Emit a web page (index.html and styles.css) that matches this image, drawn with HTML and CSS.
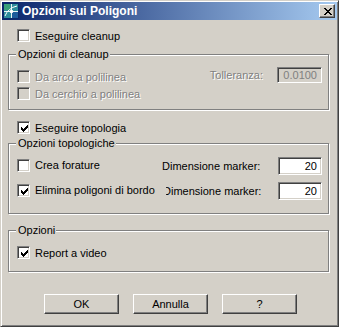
FILE: index.html
```html
<!DOCTYPE html>
<html lang="it">
<head>
    <meta charset="UTF-8">
    <title>Opzioni sui Poligoni</title>
    <link rel="stylesheet" href="styles.css">
</head>
<body>
    <div class="window">
        <div class="titlebar">
            <svg class="app-icon" width="16" height="16" viewBox="0 0 16 16">
                <rect x="0" y="0" width="16" height="16" fill="#0a2a6a"/>
                <rect x="1" y="1" width="14" height="14" fill="#2e8c9c"/>
                <path d="M1 1h6v6h-6z" fill="#3aa07a"/>
                <path d="M9 9h6v6h-6z" fill="#1c5c9c"/>
                <path d="M8.5 1v14M1 8.5h14" stroke="#e8f4f4" stroke-width="1" fill="none"/>
                <path d="M2 13 Q5 5 14 3" stroke="#ffffff" stroke-width="1" fill="none"/>
                <circle cx="8.5" cy="8.5" r="1.8" fill="#ffffff"/>
            </svg>
            <span class="title">Opzioni sui Poligoni</span>
            <button type="button" class="close-btn">
                <svg width="8" height="7" viewBox="0 0 8 7">
                    <path d="M0 0h2v1h-2zM6 0h2v1h-2zM1 1h2v1h-2zM5 1h2v1h-2zM2 2h4v1h-4zM3 3h2v1h-2zM2 4h4v1h-4zM1 5h2v1h-2zM5 5h2v1h-2zM0 6h2v1h-2zM6 6h2v1h-2z" fill="#000"/>
                </svg>
            </button>
        </div>

        <div class="client">
            <label class="check row-cleanup">
                <span class="box"></span>
                <span>Eseguire cleanup</span>
            </label>

            <div class="group group-cleanup">
                <span class="legend">Opzioni di cleanup</span>
                <div class="line line-first">
                    <label class="check disabled">
                        <span class="box"></span>
                        <span>Da arco a polilinea</span>
                    </label>
                    <div class="field-right">
                        <span class="disabled-text">Tolleranza:</span>
                        <span class="edit edit-small disabled-edit">0.0100</span>
                    </div>
                </div>
                <div class="line line-second">
                    <label class="check disabled">
                        <span class="box"></span>
                        <span>Da cerchio a polilinea</span>
                    </label>
                </div>
            </div>

            <label class="check row-topo">
                <span class="box checked">
                    <svg width="7" height="7" viewBox="0 0 7 7"><path d="M6 0h1v1h-1zM5 1h2v1h-2zM0 2h1v1h-1zM4 2h3v1h-3zM0 3h2v1h-2zM3 3h3v1h-3zM0 4h5v1h-5zM1 5h3v1h-3zM2 6h1v1h-1z" fill="#000"/></svg>
                </span>
                <span>Eseguire topologia</span>
            </label>

            <div class="group group-topo">
                <span class="legend">Opzioni topologiche</span>
                <div class="topo-row topo-first">
                    <label class="check topo-check">
                        <span class="box"></span>
                        <span>Crea forature</span>
                    </label>
                    <span class="marker-label">Dimensione marker:</span>
                    <span class="edit edit-marker">20</span>
                </div>
                <div class="topo-row topo-second">
                    <label class="check topo-check wide">
                        <span class="box checked">
                            <svg width="7" height="7" viewBox="0 0 7 7"><path d="M6 0h1v1h-1zM5 1h2v1h-2zM0 2h1v1h-1zM4 2h3v1h-3zM0 3h2v1h-2zM3 3h3v1h-3zM0 4h5v1h-5zM1 5h3v1h-3zM2 6h1v1h-1z" fill="#000"/></svg>
                        </span>
                        <span>Elimina poligoni di bordo</span>
                    </label>
                    <span class="marker-label clipped"><span>Dimensione marker:</span></span>
                    <span class="edit edit-marker">20</span>
                </div>
            </div>

            <div class="group group-opzioni">
                <span class="legend">Opzioni</span>
                <label class="check row-report">
                    <span class="box checked">
                        <svg width="7" height="7" viewBox="0 0 7 7"><path d="M6 0h1v1h-1zM5 1h2v1h-2zM0 2h1v1h-1zM4 2h3v1h-3zM0 3h2v1h-2zM3 3h3v1h-3zM0 4h5v1h-5zM1 5h3v1h-3zM2 6h1v1h-1z" fill="#000"/></svg>
                    </span>
                    <span>Report a video</span>
                </label>
            </div>

            <div class="buttons">
                <button type="button" class="btn">OK</button>
                <button type="button" class="btn">Annulla</button>
                <button type="button" class="btn">?</button>
            </div>
        </div>
    </div>
</body>
</html>
```

FILE: styles.css
```css
body {
    margin: 0;
    background-color: #d4d0c8;
    font-family: "Liberation Sans", Arial, sans-serif;
    font-size: 11px;
    color: #000;
}

.window {
    width: 339px;
    height: 327px;
    box-sizing: border-box;
    padding: 1px;
    border: 1px solid;
    border-color: #d4d0c8 #404040 #404040 #d4d0c8;
    box-shadow: inset 1px 1px #fff, inset -1px -1px #808080;
    background-color: #d4d0c8;
}

/* barra del titolo */
.titlebar {
    height: 18px;
    display: flex;
    align-items: center;
    background: linear-gradient(to right, #0a246a, #a6caf0);
    color: #fff;
}

.app-icon {
    margin-left: 1px;
    flex-shrink: 0;
}

.title {
    margin-left: 3px;
    font-weight: bold;
    font-size: 12px;
}

.close-btn {
    margin-left: auto;
    margin-right: 2px;
    width: 16px;
    height: 14px;
    padding: 0;
    box-sizing: border-box;
    border: 1px solid;
    border-color: #fff #404040 #404040 #fff;
    box-shadow: inset -1px -1px #808080;
    background-color: #d4d0c8;
    display: flex;
    align-items: center;
    justify-content: center;
}

.close-btn svg {
    margin-left: 1px;
}

.client {
    display: flex;
    flex-direction: column;
    padding-left: 6px;
}

/* checkbox */
.check {
    display: flex;
    align-items: center;
    white-space: nowrap;
    height: 13px;
}

.box {
    width: 13px;
    height: 13px;
    box-sizing: border-box;
    border: 1px solid;
    border-color: #808080 #fff #fff #808080;
    box-shadow: inset 1px 1px #404040, inset -1px -1px #d4d0c8;
    background-color: #fff;
    margin-right: 5px;
    flex-shrink: 0;
    display: flex;
    padding: 3px 0 0 3px;
}

.box svg {
    display: block;
}

.disabled {
    color: #808080;
    text-shadow: 1px 1px #fff;
}

.disabled .box {
    background-color: #d4d0c8;
}

.disabled-text {
    color: #808080;
    text-shadow: 1px 1px #fff;
}

.row-cleanup {
    margin-top: 9px;
    margin-left: 9px;
}

.row-topo {
    margin-top: 11px;
    margin-left: 9px;
}

/* gruppi */
.group {
    position: relative;
    width: 321px;
    box-sizing: border-box;
    border: 1px solid #808080;
    box-shadow: inset 1px 1px #fff, 1px 1px #fff;
}

.legend {
    position: absolute;
    top: -7px;
    left: 7px;
    padding: 0 1px 0 2px;
    background-color: #d4d0c8;
    line-height: 13px;
}

.group-cleanup {
    margin-top: 12px;
    height: 56px;
    padding: 12px 0 0 8px;
}

.line {
    display: flex;
    align-items: flex-end;
}

.line-first {
    height: 16px;
}

.line-second {
    margin-top: 4px;
}

.field-right {
    margin-left: auto;
    margin-right: 6px;
    display: flex;
    align-items: center;
    gap: 14px;
}

/* campi di testo */
.edit {
    box-sizing: border-box;
    border: 1px solid;
    border-color: #808080 #fff #fff #808080;
    box-shadow: inset 1px 1px #404040, inset -1px -1px #d4d0c8;
    background-color: #fff;
    text-align: right;
    padding-right: 4px;
    display: flex;
    align-items: center;
    justify-content: flex-end;
}

.edit-small {
    width: 45px;
    height: 16px;
}

.disabled-edit {
    background-color: #d4d0c8;
    color: #808080;
}

.group-topo {
    margin-top: 9px;
    height: 71px;
    padding: 13px 6px 0 8px;
}

.topo-row {
    display: flex;
    align-items: center;
    height: 18px;
}

.topo-second {
    margin-top: 7px;
}

.topo-check {
    width: 145px;
    margin-top: -2px;
}

.topo-check.wide {
    width: 149px;
}

.marker-label {
    white-space: nowrap;
}

.clipped {
    overflow: hidden;
}

.clipped span {
    display: inline-block;
    margin-left: -3px;
}

.edit-marker {
    margin-left: auto;
    width: 44px;
    height: 18px;
}

.group-opzioni {
    margin-top: 16px;
    height: 42px;
    padding: 15px 0 0 8px;
}

/* pulsanti */
.buttons {
    display: flex;
    gap: 14px;
    margin-top: 22px;
    padding-left: 36px;
}

.btn {
    width: 75px;
    height: 20px;
    box-sizing: border-box;
    border: 1px solid;
    border-color: #fff #404040 #404040 #fff;
    box-shadow: inset -1px -1px #808080;
    background-color: #d4d0c8;
    font-family: "Liberation Sans", Arial, sans-serif;
    font-size: 11px;
    color: #000;
    padding: 0;
}
```
